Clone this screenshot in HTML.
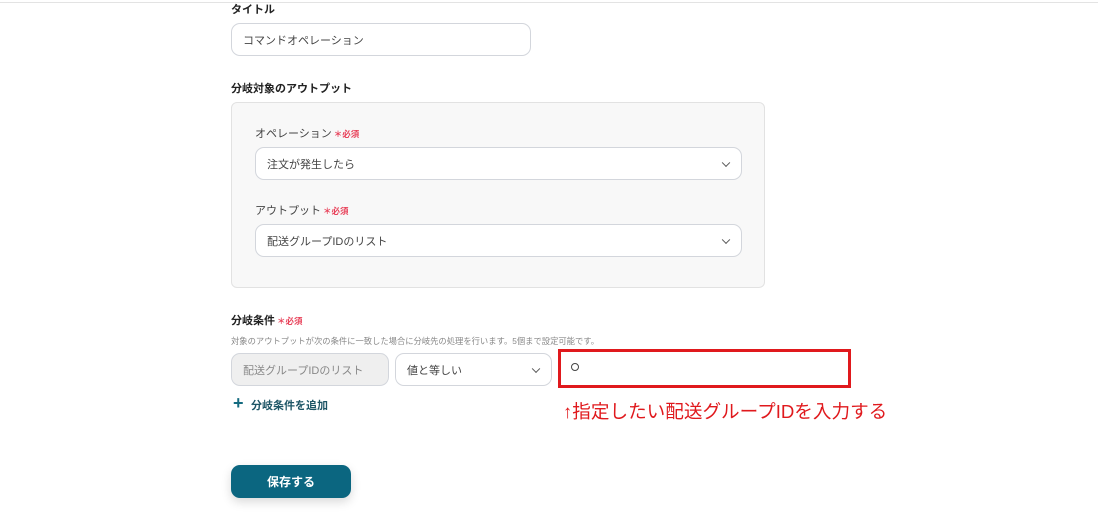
<!DOCTYPE html>
<html><head><meta charset="utf-8"><style>
*{box-sizing:border-box;margin:0;padding:0}
body{width:1098px;height:517px;background:#fff;position:relative;overflow:hidden;font-family:"Liberation Sans","Noto Sans CJK JP",sans-serif;color:#333}
.a{position:absolute}
.lbl{font-size:11px;font-weight:bold;color:#222}
.req{color:#e8425a;font-size:8.5px;font-weight:bold;margin-left:2px}
.inp{border:1px solid #d3d6dc;border-radius:9px;background:#fff;font-size:11px;color:#444;padding-left:11px;display:flex;align-items:center}
.chev{position:absolute;right:12px;top:50%;width:6px;height:6px;border-right:1.5px solid #555;border-bottom:1.5px solid #555;transform:translateY(-70%) rotate(45deg)}
</style></head><body>
<div class="a" style="left:0;top:2px;width:1098px;height:1px;background:#e3e3e3"></div>
<div class="a lbl" style="left:231px;top:1px">タイトル</div>
<div class="a inp" style="left:231px;top:23px;width:300px;height:33px">コマンドオペレーション</div>
<div class="a lbl" style="left:231px;top:80px">分岐対象のアウトプット</div>
<div class="a" style="left:231px;top:102px;width:534px;height:186px;background:#f8f8f8;border:1px solid #e2e2e2;border-radius:6px"></div>
<div class="a lbl" style="left:255px;top:125px;font-weight:normal;color:#444">オペレーション<span class="req">＊必須</span></div>
<div class="a inp" style="left:255px;top:147px;width:487px;height:33px">注文が発生したら<span class="chev"></span></div>
<div class="a lbl" style="left:255px;top:202px;font-weight:normal;color:#444">アウトプット<span class="req">＊必須</span></div>
<div class="a inp" style="left:255px;top:224px;width:487px;height:33px">配送グループIDのリスト<span class="chev"></span></div>
<div class="a lbl" style="left:231px;top:312px">分岐条件<span class="req">＊必須</span></div>
<div class="a" style="left:231px;top:335px;font-size:8.3px;color:#888">対象のアウトプットが次の条件に一致した場合に分岐先の処理を行います。5個まで設定可能です。</div>
<div class="a inp" style="left:231px;top:353px;width:158px;height:33px;background:#efefef;color:#888">配送グループIDのリスト</div>
<div class="a inp" style="left:395px;top:353px;width:157px;height:33px">値と等しい<span class="chev"></span></div>
<div class="a" style="left:558px;top:349px;width:293px;height:39px;border:3px solid #e0191d"></div>
<div class="a" style="left:571px;top:363px;width:8px;height:8px;border:1.2px solid #444;border-radius:50%"></div>
<div class="a" style="left:233px;top:394px;font-size:18px;color:#156b80;font-weight:bold;line-height:18px">+</div>
<div class="a lbl" style="left:251px;top:397px;color:#1d5566">分岐条件を追加</div>
<div class="a" style="left:563px;top:397px;font-size:18.6px;color:#e0191d;white-space:nowrap">↑指定したい配送グループIDを入力する</div>
<div class="a" style="left:231px;top:465px;width:120px;height:33px;background:#0b6680;border-radius:9px;color:#fff;font-size:12px;font-weight:bold;display:flex;align-items:center;justify-content:center;box-shadow:0 4px 10px rgba(0,0,0,.15)">保存する</div>
</body></html>
